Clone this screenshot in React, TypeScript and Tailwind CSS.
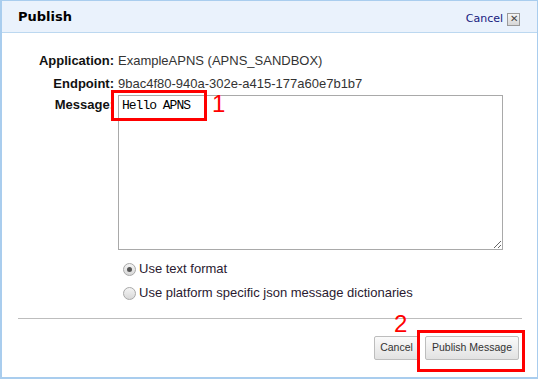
import React from "react";

const arial = { fontFamily: '"Liberation Sans", Arial, sans-serif' };

function Radio({ checked }: { checked?: boolean }) {
  return (
    <span className="relative inline-flex h-[13px] w-[13px] items-center justify-center rounded-full border border-[#a8a8a8] bg-gradient-to-b from-[#f4f4f4] to-[#d8d8d8]">
      {checked && <span className="h-[5px] w-[5px] rounded-full bg-[#555]" />}
    </span>
  );
}

export default function App() {
  return (
    <div
      className="relative flex h-[379px] w-[538px] flex-col overflow-hidden border border-l-2 border-b-2 border-[#a9cdee] bg-white"
      style={arial}
    >
      {/* header */}
      <div className="flex h-[32px] shrink-0 items-center justify-between border-b border-[#bcd8f0] bg-[#eaf2fc] pl-[16px] pr-[17px]">
        <span
          className="pt-[1px] text-[13px] font-bold text-black"
          style={{ fontFamily: '"DejaVu Sans", Verdana, sans-serif' }}
        >
          Publish
        </span>
        <div className="flex items-center gap-[4px] pt-[5px]">
          <span
            className="text-[11px] text-[#15207e]"
            style={{ fontFamily: '"DejaVu Sans", Verdana, sans-serif' }}
          >
            Cancel
          </span>
          <span className="flex h-[13px] w-[13px] items-center justify-center border border-[#9a9a9a] bg-gradient-to-b from-[#f6f6f6] to-[#d6d6d6] text-[10px] leading-none text-[#444]">
            ✕
          </span>
        </div>
      </div>

      {/* body */}
      <div className="flex flex-col pt-[16px]">
        <div className="flex h-[23px] items-center text-[13px]">
          <span className="w-[116px] pr-[4px] text-right font-bold text-[#111]">Application:</span>
          <span className="text-[#333]">ExampleAPNS (APNS_SANDBOX)</span>
        </div>
        <div className="flex h-[23px] items-center text-[13px]">
          <span className="w-[116px] pr-[4px] text-right font-bold text-[#111]">Endpoint:</span>
          <span className="text-[#333]">9bac4f80-940a-302e-a415-177a60e7b1b7</span>
        </div>
        <div className="flex text-[13px]">
          <span className="w-[116px] pr-[4px] pt-[2px] text-right font-bold leading-[15px] text-[#111]">
            Message:
          </span>
          <textarea
            defaultValue="Hello APNS"
            className="h-[155px] w-[385px] resize border border-[#a9a9a9] px-[3px] py-[2px] text-[13px] leading-[16px] text-black outline-none"
            style={{ fontFamily: '"Liberation Mono", "DejaVu Sans Mono", monospace', letterSpacing: "-1px" }}
          />
        </div>

        <div className="mt-[7px] flex flex-col pl-[121px] text-[13px] text-[#2a1a30]">
          <div className="flex h-[24px] items-center gap-[3px]">
            <Radio checked />
            <span>Use text format</span>
          </div>
          <div className="flex h-[24px] items-center gap-[3px]">
            <Radio />
            <span>Use platform specific json message dictionaries</span>
          </div>
        </div>

        <div className="ml-[16px] mr-[15px] mt-[13px] border-t border-[#bdbdbd]" />

        <div className="mr-[18px] mt-[17px] flex justify-end gap-[6px] text-[10.5px] text-[#333]">
          <button className="h-[24px] w-[45px] rounded-[2px] border border-[#bdbdbd] bg-gradient-to-b from-[#fafafa] to-[#e2e2e2]">
            Cancel
          </button>
          <button className="h-[24px] w-[94px] rounded-[2px] border border-[#bdbdbd] bg-gradient-to-b from-[#fafafa] to-[#e2e2e2]">
            Publish Message
          </button>
        </div>
      </div>

      {/* annotations */}
      <div className="pointer-events-none absolute left-[109px] top-[89px] h-[31px] w-[96px] border-[3px] border-[#ff0000]" />
      <span className="absolute left-[210px] top-[91px] text-[24px] font-light leading-none text-[#ff0000]">1</span>
      <div className="pointer-events-none absolute left-[415px] top-[329px] h-[42px] w-[108px] border-[3px] border-[#ff0000]" />
      <span className="absolute left-[392px] top-[311px] text-[24px] leading-none text-[#ff0000]">2</span>
    </div>
  );
}
